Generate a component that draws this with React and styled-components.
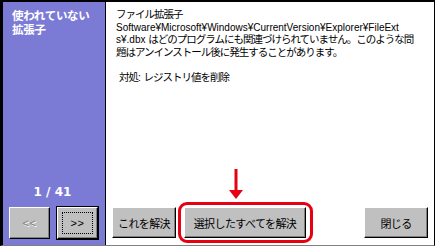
import React from "react";
import styled, { createGlobalStyle } from "styled-components";

const Global = createGlobalStyle`
  html, body { margin: 0; padding: 0; background: #fff; }
  body { font-family: "Noto Sans CJK JP", "Liberation Sans", sans-serif; }
  * { box-sizing: border-box; }
`;

const Frame = styled.div`
  width: 436px;
  height: 248px;
  background: #fff;
  padding: 0 1px 2px 0;
  display: flex;
`;

const Window = styled.div`
  flex: 1;
  display: flex;
  border-style: solid;
  border-width: 2px 1px 1px 3px;
  border-color: #000 #000 #808080 #000;
  background: #fff;
`;

const Side = styled.div`
  width: 103px;
  background: #7b7bd6;
  border-right: 1px solid #000;
  display: flex;
  flex-direction: column;
  padding: 6px 0 6px 0;
`;

const Title = styled.div`
  color: #fff;
  font-weight: 700;
  font-size: 11.5px;
  line-height: 14px;
  letter-spacing: -0.3px;
  padding-left: 9px;
`;

const Counter = styled.div`
  margin-top: auto;
  color: #fff;
  font-family: "DejaVu Sans", sans-serif;
  font-weight: 700;
  font-size: 12px;
  line-height: 14px;
  text-align: center;
  white-space: pre;
  padding-right: 3px;
  margin-bottom: 8px;
`;

const NavRow = styled.div`
  display: flex;
  gap: 7px;
  padding-left: 6px;
`;

const Btn = styled.button`
  position: relative;
  width: ${(p) => p.$w}px;
  height: ${(p) => p.$h || 31}px;
  padding: 0;
  margin: 0;
  background: #c0c0c0;
  border-style: solid;
  border-width: 1px;
  border-color: #fff #000 #000 #fff;
  box-shadow: inset -1px -1px 0 #808080;
  font-family: ${(p) => (p.$latin ? '"Liberation Sans", sans-serif' : '"Noto Sans CJK JP", sans-serif')};
  font-size: 11px;
  letter-spacing: ${(p) => (p.$latin ? "0.5px" : "-0.6px")};
  color: ${(p) => (p.disabled ? "#808080" : "#000")};
  text-shadow: ${(p) => (p.disabled ? "1px 1px 0 #fff" : "none")};
  display: flex;
  align-items: center;
  justify-content: center;
  cursor: default;
  outline: ${(p) => (p.$default ? "1px solid #000" : "none")};
  outline-offset: 0;
`;

const Focus = styled.span`
  position: absolute;
  inset: 4px;
  border: 1px dotted #000;
  pointer-events: none;
`;

const Main = styled.div`
  flex: 1;
  display: flex;
  flex-direction: column;
`;

const Body = styled.div`
  flex: 1;
  padding: 6px 0 0 10px;
  font-size: 10.5px;
  line-height: 12.5px;
  letter-spacing: -1px;
  color: #000;
  white-space: nowrap;
`;

const Line = styled.div`
  height: 12.5px;
  padding-left: ${(p) => p.$indent || 0}px;
`;

const Latin = styled.span`
  font-family: "Liberation Sans", sans-serif;
  font-size: 10px;
  letter-spacing: 0;
`;

const ButtonRow = styled.div`
  display: flex;
  align-items: center;
  padding: 0 6px 2px 6px;
`;

const Ring = styled.div`
  position: relative;
  margin-left: 2px;
  border: 3px solid #e60012;
  border-radius: 9px;
  padding: 2px 4px 2px 3px;
  display: flex;
`;

const Arrow = styled.svg`
  position: absolute;
  left: 48px;
  top: -36px;
`;

const Spacer = styled.div`
  flex: 1;
`;

export default function App() {
  return (
    <>
      <Global />
      <Frame>
        <Window>
          <Side>
            <Title>
              使われていない
              <br />
              拡張子
            </Title>
            <Counter>{"1 / 41"}</Counter>
            <NavRow>
              <Btn $w={41} $h={32} $latin disabled>
                {"<<"}
              </Btn>
              <Btn $w={41} $h={32} $latin $default>
                {">>"}
                <Focus />
              </Btn>
            </NavRow>
          </Side>
          <Main>
            <Body>
              <Line>ファイル拡張子</Line>
              <Line>
                <Latin>Software¥Microsoft¥Windows¥CurrentVersion¥Explorer¥FileExt</Latin>
              </Line>
              <Line>
                <Latin>s¥.dbx </Latin>はどのプログラムにも関連づけられていません。このような問
              </Line>
              <Line>題はアンインストール後に発生することがあります。</Line>
              <Line />
              <Line $indent={3}>
                対処<Latin>: </Latin>レジストリ値を削除
              </Line>
            </Body>
            <ButtonRow>
              <Btn $w={64}>これを解決</Btn>
              <Ring>
                <Arrow width="14" height="31" viewBox="0 0 14 31">
                  <rect x="5.5" y="0" width="3" height="23" fill="#e60012" />
                  <polygon points="0,21 14,21 7,30" fill="#e60012" />
                </Arrow>
                <Btn $w={122}>選択したすべてを解決</Btn>
              </Ring>
              <Spacer />
              <Btn $w={64}>閉じる</Btn>
            </ButtonRow>
          </Main>
        </Window>
      </Frame>
    </>
  );
}
